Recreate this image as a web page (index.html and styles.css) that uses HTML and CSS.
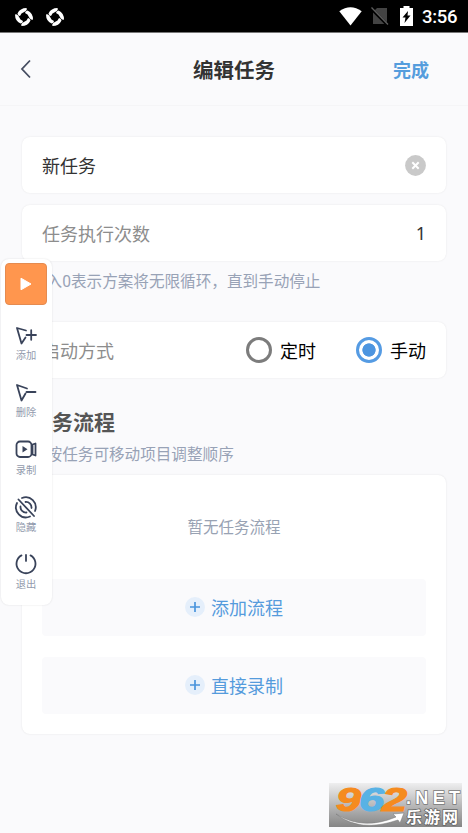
FILE: index.html
```html
<!DOCTYPE html>
<html lang="zh-CN">
<head>
<meta charset="utf-8">
<title>编辑任务</title>
<link rel="stylesheet" href="styles.css">
</head>
<body>
<svg width="0" height="0" class="defs">
  <defs>
    <symbol id="swirl" viewBox="0 0 20 20">
      <g id="blades" fill="#fff">
        <path id="blade" d="M3.500 6.500Q6 1 12.500 1 13.500 3 11 4.500L7.500 6.500 6 9Q4 9 3.500 6.500Z"/>
        <use href="#blade" transform="rotate(90 10 10)"/>
        <use href="#blade" transform="rotate(180 10 10)"/>
        <use href="#blade" transform="rotate(270 10 10)"/>
      </g>
    </symbol>
    <symbol id="plus" viewBox="0 0 20 20">
      <circle cx="10" cy="10" r="10" fill="#e5effb"/>
      <path d="M10 5v10M5 10h10" stroke="#4a94dc" stroke-width="1.700"/>
    </symbol>
  </defs>
</svg>
<div class="screen">
  <div class="status">
    <div class="status-left">
      <svg width="20" height="20"><use href="#swirl"/></svg>
      <svg width="20" height="20"><use href="#swirl"/></svg>
    </div>
    <div class="status-right">
      <svg width="23" height="19" viewBox="0 0 23 19"><path d="M.300 4.200Q11.500-3.700 22.700 4.200L11.500 18.500Z" fill="#fff"/></svg>
      <svg width="18" height="19" viewBox="0 0 18 19"><path d="M6 1h10v16H2V5Z" fill="#434343"/><path d="M0 1.500 16.500 18" stroke="#000" stroke-width="3"/><path d="M.500.500 17 17.500" stroke="#5d5d5d" stroke-width="1.300"/></svg>
      <svg width="13" height="20" viewBox="0 0 13 20"><path d="M3.500 0h6v2H13v18H0V2h3.500Z" fill="#fff"/><path d="M8 5 2.500 11.500h3L4.500 17 10.500 9.500h-3Z" fill="#000"/></svg>
      <span>3:56</span>
    </div>
  </div>
  <header class="navbar">
    <svg class="back" width="12" height="20" viewBox="0 0 12 20"><path d="M10 1.500 2 10l8 8.500" fill="none" stroke="#454d61" stroke-width="1.800"/></svg>
    <h1>编辑任务</h1>
    <span class="done">完成</span>
  </header>
  <main>
    <section class="row">
      <span class="name">新任务</span>
      <svg width="21" height="21" viewBox="0 0 21 21"><circle cx="10.500" cy="10.500" r="10.400" fill="#c9c9c9"/><path d="m7.300 7.300 6.400 6.400m0-6.400-6.400 6.400" stroke="#fff" stroke-width="2"/></svg>
    </section>
    <section class="row">
      <span class="label">任务执行次数</span>
      <span class="count">1</span>
    </section>
    <p class="hint">输入0表示方案将无限循环，直到手动停止</p>
    <section class="row mode-row">
      <span class="label">启动方式</span>
      <div class="radios">
        <span class="option"><i class="radio"></i>定时</span>
        <span class="option"><i class="radio checked"></i>手动</span>
      </div>
    </section>
    <h2>任务流程</h2>
    <p class="sub">长按任务可移动项目调整顺序</p>
    <section class="flow">
      <p class="empty">暂无任务流程</p>
      <div class="action"><svg width="20" height="20"><use href="#plus"/></svg>添加流程</div>
      <div class="action"><svg width="20" height="20"><use href="#plus"/></svg>直接录制</div>
    </section>
  </main>
  <aside class="toolbar">
    <div class="play"><svg width="12" height="14" viewBox="0 0 12 14"><path d="M1 1.200v11.600L11 7Z" fill="#fff" stroke="#fff" stroke-linejoin="round"/></svg></div>
    <div class="tool">
      <svg viewBox="0 0 22 22"><path d="M11 5.500 2 3l4.500 15.500L10.500 12.500"/><path d="M11.500 10h9.500M16.200 5.200v9.600"/></svg>
      <span>添加</span>
    </div>
    <div class="tool">
      <svg viewBox="0 0 22 22"><path d="M12 6.500 2 3l4.500 15.500L10.500 11.500"/><path d="M11.500 10h9"/></svg>
      <span>删除</span>
    </div>
    <div class="tool">
      <svg viewBox="0 0 22 22"><rect x="1.500" y="1.500" width="15" height="15.500" rx="3.500"/><path d="M17.500 4.500 20.500 3.500v12L17.500 14.500Z"/><path d="M7.500 6v6.500l5-3.200Z" fill="#39435a" stroke="none"/></svg>
      <span>录制</span>
    </div>
    <div class="tool">
      <svg viewBox="0 0 22 22"><path d="m3.500 2.500 15.500 16.500"/><path d="M7 1A10 10 0 0 1 20 14M2 6A10 10 0 0 0 15 19.500M10.500 5A5.500 5.500 0 0 1 16.500 11M5.500 9.500A5.500 5.500 0 0 0 11.500 15.500"/></svg>
      <span>隐藏</span>
    </div>
    <div class="tool">
      <svg viewBox="0 0 22 22"><path d="M11 .900v6M6.500 1.400a9.500 9.500 0 1 0 9 0"/></svg>
      <span>退出</span>
    </div>
  </aside>
  <div class="watermark">
    <svg width="133" height="44" viewBox="0 0 133 44">
      <defs><linearGradient id="wm" x2="0" y2="1"><stop stop-color="#eeeeef"/><stop offset="1" stop-color="#858585"/></linearGradient></defs>
      <rect width="133" height="44" fill="url(#wm)"/>
      <path d="M7 31Q34 48 67 34L64 31 75 30 71 40 69 37Q31 50 7 31Z" fill="#fff" stroke="#777" stroke-width=".5"/>
      <g class="digits"><text x="7" y="28" textLength="25" lengthAdjust="spacingAndGlyphs" fill="#f58b1f" stroke="#f58b1f">9</text><text x="30" y="28" textLength="25" lengthAdjust="spacingAndGlyphs" fill="#58b2e5" stroke="#58b2e5">6</text><text x="53" y="28" textLength="25" lengthAdjust="spacingAndGlyphs" fill="#f58b1f" stroke="#f58b1f">2</text></g>
      <text class="net" x="77" y="21" textLength="54" lengthAdjust="spacing">.NET</text>
      <text class="site" x="77" y="39.500" textLength="52">乐游网</text>
    </svg>
  </div>
</div>
</body>
</html>
```
FILE: styles.css
```css
* { box-sizing: border-box; }
body {
  margin: 0;
  background: #fafafc;
  font-family: Roboto, "Noto Sans CJK SC", sans-serif;
}
h1, h2, p { margin: 0; }
svg { display: block; flex: none; }
.defs { position: absolute; }
.screen { position: relative; width: 468px; height: 833px; overflow: hidden; }
.status {
  display: flex;
  justify-content: space-between;
  height: 32px;
  padding: 0 10px 0 14px;
  background: #000;
  box-shadow: 0 1px #777;
}
.status-left { display: flex; gap: 11px; padding-top: 7px; }
.status-right { display: flex; align-items: center; gap: 9px; color: #fff; }
.status-right span { width: 36px; font-size: 18.500px; font-weight: 500; line-height: 22px; letter-spacing: -.3px; white-space: nowrap; padding-top: 1px; }
.status-right svg:nth-child(3) { margin-left: 2px; }
.navbar {
  display: grid;
  grid-template-columns: 100px 1fr 100px;
  align-items: center;
  height: 74px;
  border-bottom: 1px solid #f5f5f7;
}
.back { margin-left: 20px; }
h1 { padding-top: 4px; text-align: center; font-size: 20.500px; line-height: 30px; color: #333; }
.done { padding-left: 25px; font-size: 18px; font-weight: 700; color: #559ddd; }
main { padding: 31px 22px 0; }
.row {
  display: flex;
  align-items: center;
  justify-content: space-between;
  height: 56px;
  padding: 0 20px;
  margin-bottom: 12px;
  border-radius: 8px;
  background: #fff;
  box-shadow: 0 0 2px rgba(0, 0, 0, .09);
  font-size: 18px;
}
.name { color: #333; }
.label { color: #8d8d8d; }
.count { color: #333; font-family: "Noto Sans", sans-serif; }
.hint, .sub {
  padding-left: 9px;
  color: #98a2b6;
  font-size: 15.600px;
  line-height: 24px;
  white-space: nowrap;
}
.hint { margin-top: -3px; }
.mode-row { margin-top: 28px; margin-bottom: 29px; }
.radios { display: flex; gap: 40px; color: #000; }
.option { display: flex; align-items: center; gap: 8px; }
.radio {
  display: block;
  width: 26px;
  height: 26px;
  border: 3px solid #7c7c7c;
  border-radius: 50%;
}
.checked { border-color: #559be3; background: radial-gradient(circle, #4d95e0 6.300px, #fff 7px); }
h2 { padding-left: 9px; font-size: 21px; line-height: 32px; color: #555; }
.sub { margin-top: 4px; }
.flow {
  height: 259px;
  margin-top: 8px;
  padding: 0 20px;
  border-radius: 8px;
  background: #fff;
  box-shadow: 0 0 2px rgba(0, 0, 0, .1);
}
.empty { height: 104px; line-height: 106px; text-align: center; color: #98a2b3; font-size: 15.500px; }
.action {
  display: flex;
  align-items: center;
  justify-content: center;
  gap: 6px;
  height: 57px;
  margin-bottom: 21px;
  padding-bottom: 2px;
  border-radius: 4px;
  background: #fafafc;
  color: #559bdc;
  font-size: 18px;
}
.toolbar {
  position: absolute;
  left: 1px;
  top: 259px;
  width: 51px;
  height: 346px;
  padding: 4px;
  border-radius: 8px;
  background: #fff;
  box-shadow: 0 0 2px rgba(0, 0, 0, .12);
}
.play {
  display: flex;
  align-items: center;
  justify-content: center;
  width: 42px;
  height: 42px;
  margin-bottom: 20px;
  border: 1px solid #e58b50;
  border-radius: 4px;
  background: #ff964e;
}
.tool {
  display: flex;
  flex-direction: column;
  align-items: center;
  height: 57.300px;
  width: 42px;
  color: #929bad;
  font-size: 10.300px;
  line-height: 16px;
}
.tool svg { width: 22px; height: 22px; margin-bottom: 1px; overflow: visible; fill: none; stroke: #39435a; stroke-width: 1.800; stroke-linecap: round; stroke-linejoin: round; }
.watermark { position: absolute; left: 329px; top: 783px; }
.digits text { font: italic 700 33px "Liberation Sans", sans-serif; stroke-width: 1.200px; }
.net { font: 700 18px "Liberation Sans", sans-serif; fill: #fff; stroke: #777; stroke-width: 1.500px; paint-order: stroke; }
.site { font: 700 16px "Noto Sans CJK SC", sans-serif; fill: #fff; stroke: #666; stroke-width: 1.500px; paint-order: stroke; }
```
